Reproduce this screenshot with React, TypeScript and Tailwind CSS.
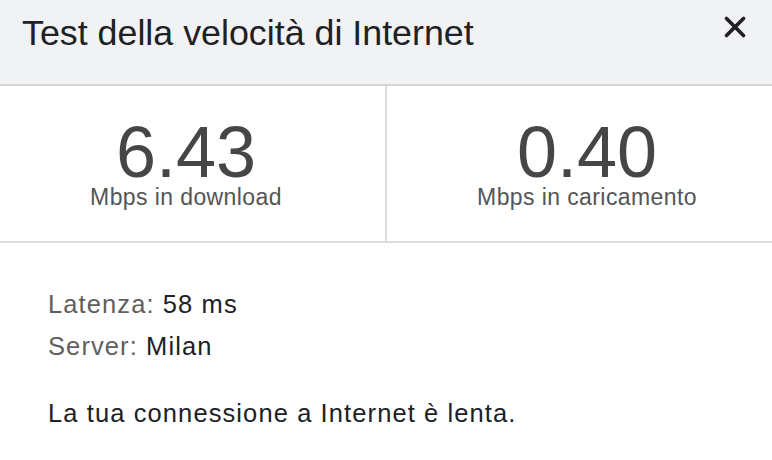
import { X } from 'lucide-react';

const stats = [
  { value: '6.43', label: 'Mbps in download', pad: 'pr-[13px]' },
  { value: '0.40', label: 'Mbps in caricamento', pad: 'pl-[15px]' },
];

const App = () => {
  return (
    <div className="w-[772px] h-[460px] bg-white overflow-hidden font-['Liberation_Sans',Arial,sans-serif]">
      {/* header */}
      <div className="h-[86px] bg-[#f1f2f4] border-b-2 border-[#d6d6d6] flex items-start justify-between pl-[22px] pr-[20px]">
        <h1 className="pt-[16px] text-[35.8px] leading-none text-[#202124]">Test della velocità di Internet</h1>
        <button type="button" className="mt-[10px] text-[#202124]">
          <X size={34} strokeWidth={2.6} />
        </button>
      </div>

      {/* results */}
      <div className="h-[157px] grid grid-cols-[387px_1fr] border-b-2 border-[#dcdcdc]">
        {stats.map((s, i) => (
          <div
            key={s.label}
            className={`flex flex-col items-center pt-[36px] ${s.pad} ${i === 0 ? 'border-r-2 border-[#dcdcdc]' : ''}`}
          >
            <div className="text-[72px] leading-[60px] text-[#464646]">{s.value}</div>
            <div className="mt-[4px] text-[23px] leading-none tracking-[0.4px] text-[#555555]">{s.label}</div>
          </div>
        ))}
      </div>

      {/* details */}
      <div className="pl-[48px] pt-[40px] text-[25.5px] leading-[42px] tracking-[1.1px]">
        <p>
          <span className="text-[#5f5f5f]">Latenza:</span> <span className="text-[#202124]">58 ms</span>
        </p>
        <p>
          <span className="text-[#5f5f5f]">Server:</span> <span className="text-[#202124]">Milan</span>
        </p>
        <p className="mt-[25px] text-[#202124]">La tua connessione a Internet è lenta.</p>
      </div>
    </div>
  );
};

export default App;
